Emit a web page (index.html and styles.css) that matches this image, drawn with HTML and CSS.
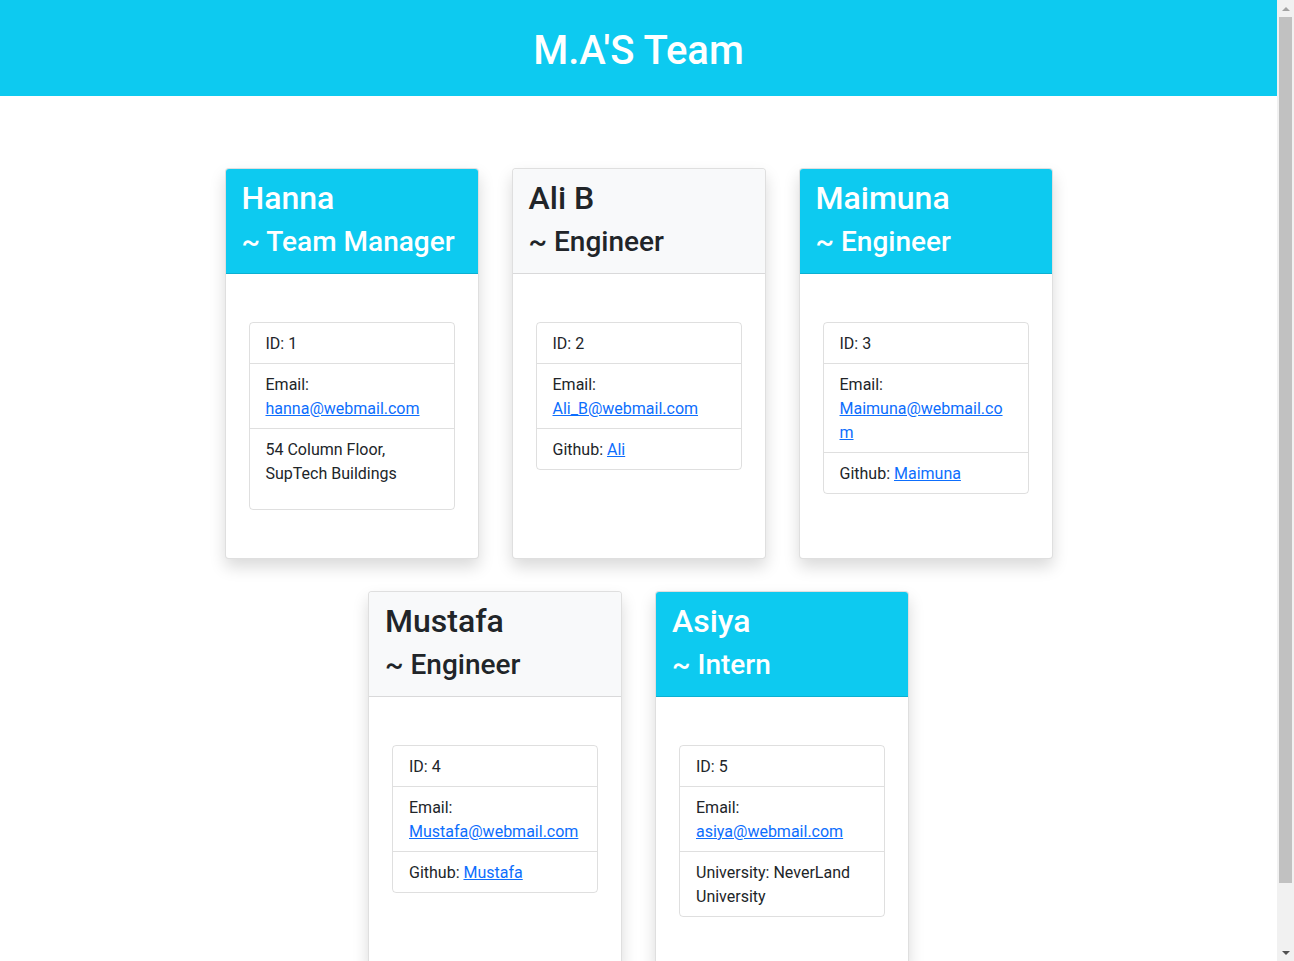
FILE: index.html
```html
<!DOCTYPE html>
<html lang="en">
<head>
<meta charset="UTF-8">
<title>M.A'S Team</title>
<link rel="stylesheet" href="styles.css">
</head>
<body>
<header class="banner">
  <h1 class="banner-title">M.A'S Team</h1>
</header>
<main class="team">
  <div class="card">
    <div class="card-header info">
      <h2 class="card-name">Hanna</h2>
      <h3 class="card-role">~ Team Manager</h3>
    </div>
    <div class="card-body">
      <ul class="list">
        <li class="list-item">ID: 1</li>
        <li class="list-item">Email: <a href="#">hanna@webmail.com</a></li>
        <li class="list-item"><p class="office">54 Column Floor, SupTech Buildings</p></li>
      </ul>
    </div>
  </div>
  <div class="card">
    <div class="card-header light">
      <h2 class="card-name">Ali B</h2>
      <h3 class="card-role">~ Engineer</h3>
    </div>
    <div class="card-body">
      <ul class="list">
        <li class="list-item">ID: 2</li>
        <li class="list-item">Email: <a href="#">Ali_B@webmail.com</a></li>
        <li class="list-item">Github: <a href="#">Ali</a></li>
      </ul>
    </div>
  </div>
  <div class="card">
    <div class="card-header info">
      <h2 class="card-name">Maimuna</h2>
      <h3 class="card-role">~ Engineer</h3>
    </div>
    <div class="card-body">
      <ul class="list">
        <li class="list-item">ID: 3</li>
        <li class="list-item">Email: <a href="#">Maimuna@webmail.com</a></li>
        <li class="list-item">Github: <a href="#">Maimuna</a></li>
      </ul>
    </div>
  </div>
  <div class="card">
    <div class="card-header light">
      <h2 class="card-name">Mustafa</h2>
      <h3 class="card-role">~ Engineer</h3>
    </div>
    <div class="card-body">
      <ul class="list">
        <li class="list-item">ID: 4</li>
        <li class="list-item">Email: <a href="#">Mustafa@webmail.com</a></li>
        <li class="list-item">Github: <a href="#">Mustafa</a></li>
      </ul>
    </div>
  </div>
  <div class="card">
    <div class="card-header info">
      <h2 class="card-name">Asiya</h2>
      <h3 class="card-role">~ Intern</h3>
    </div>
    <div class="card-body">
      <ul class="list">
        <li class="list-item">ID: 5</li>
        <li class="list-item">Email: <a href="#">asiya@webmail.com</a></li>
        <li class="list-item">University: NeverLand University</li>
      </ul>
    </div>
  </div>
</main>
<div class="scrollbar" aria-hidden="true">
  <div class="sb-button"><span class="sb-arrow up"></span></div>
  <div class="sb-track"><div class="sb-thumb"></div></div>
  <div class="sb-button"><span class="sb-arrow down"></span></div>
</div>
</body>
</html>
```

FILE: styles.css
```css
* { box-sizing: border-box; }

html { scrollbar-width: none; }
::-webkit-scrollbar { width: 0; height: 0; }

body {
  margin: 0 17px 0 0;
  font-family: Roboto, "Liberation Sans", Arial, sans-serif;
  font-size: 16px;
  line-height: 1.5;
  color: #212529;
  background: #fff;
}

.banner {
  background: #0dcaf0;
  padding: 27px 0 21px;
  text-align: center;
}

.banner-title {
  margin: 0;
  font-size: 40px;
  line-height: 48px;
  font-weight: 500;
  color: #fff;
}

.team {
  width: 828px;
  margin: 72px auto 0;
  padding-bottom: 64px;
  display: flex;
  flex-wrap: wrap;
  justify-content: center;
  column-gap: 33px;
  row-gap: 32px;
}

.card {
  width: 254px;
  display: flex;
  flex-direction: column;
  border: 1px solid rgba(0, 0, 0, 0.125);
  border-radius: 4px;
  box-shadow: 0 8px 16px rgba(0, 0, 0, 0.15);
  overflow-wrap: break-word;
  background: #fff;
}

.card-header {
  padding: 10px 16px 6px;
  border-bottom: 1px solid rgba(0, 0, 0, 0.125);
  border-radius: 3px 3px 0 0;
}

.card-header.info {
  background: #0dcaf0;
  color: #fff;
}

.card-header.light {
  background: #f8f9fa;
  color: #212529;
}

.card-name {
  margin: 0 0 8px;
  font-size: 32px;
  line-height: 1.2;
  font-weight: 500;
}

.card-role {
  margin: 0 0 8px;
  font-size: 28px;
  line-height: 1.2;
  font-weight: 500;
}

.card-body {
  flex: 1;
  padding: 48px 23px;
}

.list {
  list-style: none;
  margin: 0;
  padding: 0;
  border: 1px solid rgba(0, 0, 0, 0.125);
  border-radius: 4px;
}

.list-item {
  padding: 9px 16px 7px;
  border-bottom: 1px solid rgba(0, 0, 0, 0.125);
}

.list-item:last-child {
  border-bottom: none;
}

.list-item a {
  color: #0d6efd;
  text-decoration: underline;
}

.office {
  margin: 0 0 16px;
}

/* window scrollbar as in the reference */
.scrollbar {
  position: fixed;
  top: 0;
  right: 0;
  width: 17px;
  height: 100vh;
  background: #f1f1f1;
  display: flex;
  flex-direction: column;
}

.sb-button {
  height: 17px;
  display: flex;
  align-items: center;
  justify-content: center;
}

.sb-arrow {
  width: 0;
  height: 0;
  border-left: 4px solid transparent;
  border-right: 4px solid transparent;
}

.sb-arrow.up {
  border-bottom: 4px solid #a3a3a3;
}

.sb-arrow.down {
  border-top: 4px solid #505050;
}

.sb-track {
  flex: 1;
  padding: 0 2px;
}

.sb-thumb {
  height: 866px;
  background: #c1c1c1;
}
```
